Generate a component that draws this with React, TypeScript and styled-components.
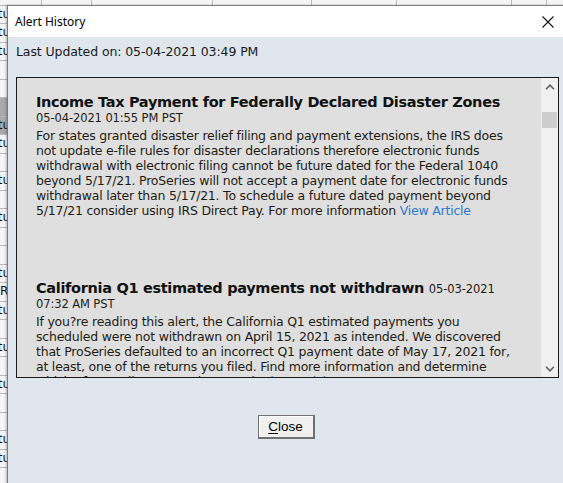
import React from 'react';
import styled, { createGlobalStyle } from 'styled-components';

const GlobalStyle = createGlobalStyle`
  html, body {
    margin:0;
    padding:0;
    background:#f0f0f0;
    overflow:hidden;
  }
`;

const Screen = styled.div`
  position:relative;
  width:563px;
  height:483px;
  overflow:hidden;
  background:#ececec;
  font-family:"DejaVu Sans", Verdana, sans-serif;
`;

const Grid = styled.div`
  display:flex;
  flex-direction:column;
  margin-top:-12.75px;
`;

const GridRow = styled.div<{ $hi?: boolean }>`
  display:grid;
  grid-template-columns:42px 50px 121px 99px 85px 115px 35px 40px;
  height:18.5px;
  box-sizing:border-box;
  border-bottom:1px solid #b9b9b9;
  background:${p => (p.$hi ? '#a9a9a9' : '#f4f4f4')};
  font-size:12px;
  line-height:17px;
`;

const Cell = styled.div<{ $blue?: boolean; $right?: boolean }>`
  border-right:1px solid #b9b9b9;
  padding:0 3px;
  white-space:nowrap;
  overflow:hidden;
  color:${p => (p.$blue ? '#2222cc' : '#111')};
  text-align:${p => (p.$right ? 'right' : 'left')};
`;

const LeadCell = styled(Cell)<{ $shift: number }>`
  padding:0;
  text-indent:${p => -p.$shift}px;
`;

const Dialog = styled.div`
  position:absolute;
  left:7px;
  top:5px;
  width:560px;
  height:490px;
  box-sizing:border-box;
  border:1px solid #7a7a7a;
  background:#dfe6ee;
  box-shadow:-1px 0 2px rgba(0,0,0,0.25);
  display:flex;
  flex-direction:column;
`;

const TitleBar = styled.div`
  height:31px;
  background:#fff;
  display:flex;
  align-items:center;
  justify-content:space-between;
  padding:0 9px 0 7px;
  font-family:"Noto Sans", "Open Sans", sans-serif;
  font-size:12px;
  color:#000;
`;

const CloseX = styled.button`
  border:0;
  background:none;
  padding:0;
  width:14px;
  height:14px;
  display:flex;
  margin-right:2px;
`;

const Body = styled.div`
  display:flex;
  flex-direction:column;
  padding:7px 7px 0 8px;
`;

const Updated = styled.div`
  font-size:12.5px;
  line-height:16px;
  color:#1a1a1a;
  letter-spacing:-0.1px;
`;

const Panel = styled.div`
  margin-top:17px;
  height:301px;
  box-sizing:border-box;
  border:1px solid #1a1a1a;
  display:flex;
  background:#dfdfdf;
`;

const Content = styled.div`
  flex:1;
  overflow:hidden;
  padding:17px 0 0 19px;
  color:#1f1c14;
`;

const Item = styled.div`
  margin-bottom:63px;
`;

const ItemTitle = styled.div`
  font-size:14.5px;
  font-weight:bold;
  line-height:15px;
  letter-spacing:-0.32px;
  white-space:nowrap;
  color:#111;
`;

const Stamp = styled.span`
  font-size:11.5px;
  font-weight:normal;
  line-height:1;
  letter-spacing:-0.1px;
  color:#1f1c14;
`;

const Text = styled.p`
  margin:3px 0 0;
  font-size:12.5px;
  line-height:15px;
  letter-spacing:-0.22px;
  white-space:nowrap;
`;

const Link = styled.a`
  color:#2c78cf;
  text-decoration:none;
`;

const Scroll = styled.div`
  width:17px;
  background:#f0f0f0;
  display:flex;
  flex-direction:column;
  align-items:center;
`;

const Arrow = styled.div`
  height:17px;
  display:flex;
  align-items:center;
  justify-content:center;
`;

const Track = styled.div`
  flex:1;
  width:100%;
  padding-top:17px;
  box-sizing:border-box;
`;

const Thumb = styled.div`
  margin:0 auto;
  width:15px;
  height:16px;
  background:#cdcdcd;
`;

const Footer = styled.div`
  display:flex;
  justify-content:center;
  padding-top:38px;
`;

const Button = styled.button`
  width:57px;
  height:24px;
  box-sizing:border-box;
  border-style:solid;
  border-color:#707070;
  border-width:1px 2px 2px 1px;
  box-shadow:inset 1px 1px 0 #fff;
  background:#f0f0f0;
  font-family:"Liberation Sans", Arial, sans-serif;
  font-size:13.5px;
  color:#000;
  padding:0;
  margin-left:-3px;
  margin-top:-1px;
  u { text-decoration-thickness:1px; text-underline-offset:2px; }
`;

const S = { lead: 'Status', shift: 22 };
const rows: { lead?: string; shift?: number; hi?: boolean }[] = [
  S, S, S, {}, {},
  { hi: true }, { ...S, hi: true }, S, {}, S,
  {}, S, {}, {}, S,
  { lead: 'Rejected', shift: 0 }, S, {}, S, {},
  S, {}, {}, S, S, {},
];

const Chevron = ({ up }: { up?: boolean }) => (
  <svg width="10" height="6" viewBox="0 0 10 6">
    <path
      d={up ? 'M1 5.2 L5 1.2 L9 5.2' : 'M1 0.8 L5 4.8 L9 0.8'}
      fill="none"
      stroke="#606060"
      strokeWidth="1.6"
    />
  </svg>
);

export default function App() {
  return (
    <Screen>
      <GlobalStyle />
      <Grid>
        <GridRow>
          <Cell>1040</Cell>
          <Cell>1040</Cell>
          <Cell $blue>Marked for EF</Cell>
          <Cell>343.00</Cell>
          <Cell />
          <Cell />
          <Cell $right>343</Cell>
          <Cell>C</Cell>
        </GridRow>
        {rows.map((r, i) => (
          <GridRow key={i} $hi={r.hi}>
            <LeadCell $shift={r.shift ?? 0}>{r.lead}</LeadCell>
          </GridRow>
        ))}
      </Grid>

      <Dialog>
        <TitleBar>
          <span>Alert History</span>
          <CloseX aria-label="Close">
            <svg width="14" height="14" viewBox="0 0 14 14">
              <path d="M1.5 1.5 L12.5 12.5 M12.5 1.5 L1.5 12.5" stroke="#111" strokeWidth="1.1" />
            </svg>
          </CloseX>
        </TitleBar>
        <Body>
          <Updated>Last Updated on: 05-04-2021 03:49 PM</Updated>
          <Panel>
            <Content>
              <Item>
                <ItemTitle>
                  Income Tax Payment for Federally Declared Disaster Zones
                  <br />
                  <Stamp>05-04-2021 01:55 PM PST</Stamp>
                </ItemTitle>
                <Text>
                  For states granted disaster relief filing and payment extensions, the IRS does<br />
                  not update e-file rules for disaster declarations therefore electronic funds<br />
                  withdrawal with electronic filing cannot be future dated for the Federal 1040<br />
                  beyond 5/17/21. ProSeries will not accept a payment date for electronic funds<br />
                  withdrawal later than 5/17/21. To schedule a future dated payment beyond<br />
                  5/17/21 consider using IRS Direct Pay. For more information <Link href="#">View Article</Link>
                </Text>
              </Item>
              <Item>
                <ItemTitle>
                  California Q1 estimated payments not withdrawn <Stamp>05-03-2021</Stamp>
                  <br />
                  <Stamp>07:32 AM PST</Stamp>
                </ItemTitle>
                <Text>
                  If you?re reading this alert, the California Q1 estimated payments you<br />
                  scheduled were not withdrawn on April 15, 2021 as intended. We discovered<br />
                  that ProSeries defaulted to an incorrect Q1 payment date of May 17, 2021 for,<br />
                  at least, one of the returns you filed. Find more information and determine<br />
                  which of your clients were impacted. <Link href="#">View Article</Link>
                </Text>
              </Item>
            </Content>
            <Scroll>
              <Arrow><Chevron up /></Arrow>
              <Track><Thumb /></Track>
              <Arrow><Chevron /></Arrow>
            </Scroll>
          </Panel>
          <Footer>
            <Button><u>C</u>lose</Button>
          </Footer>
        </Body>
      </Dialog>
    </Screen>
  );
}
